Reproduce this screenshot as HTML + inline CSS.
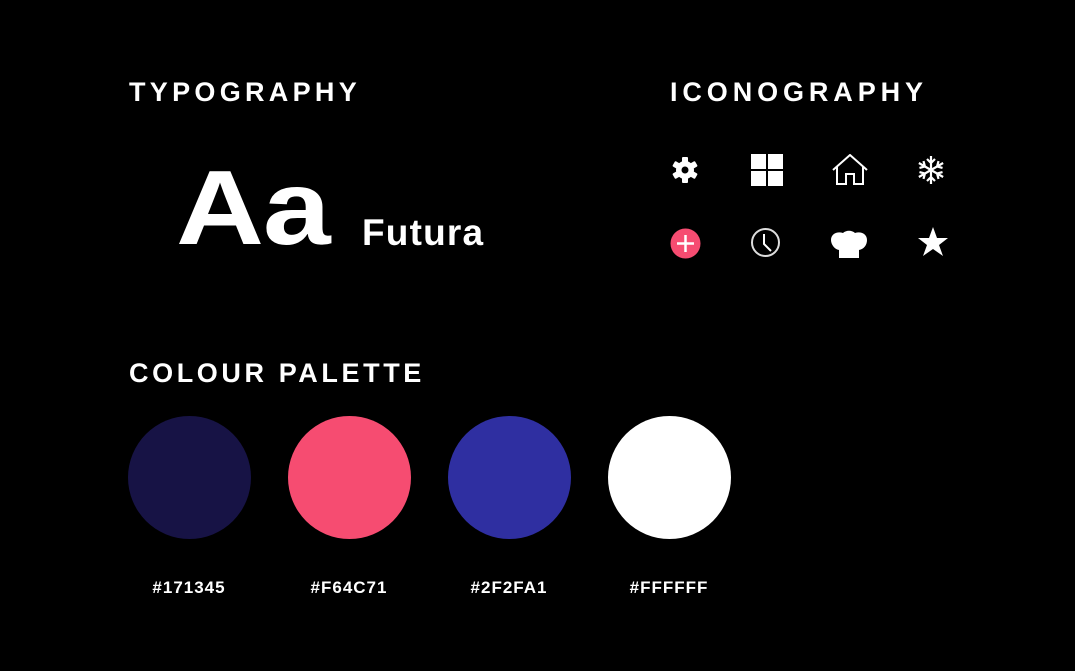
<!DOCTYPE html>
<html><head><style>
body{margin:0;width:1075px;height:671px;background:#000;overflow:hidden;position:relative;font-family:"Liberation Sans",sans-serif;color:#fff}
.h{position:absolute;font-weight:bold;font-size:27px;letter-spacing:4.3px;line-height:1}
.c{position:absolute;width:123px;height:123px;border-radius:50%;top:416px}
.l{position:absolute;top:578px;width:160px;text-align:center;font-weight:bold;font-size:17px;letter-spacing:1px}
svg{position:absolute}
</style></head><body>
<div class="h" style="left:129px;top:79px">TYPOGRAPHY</div>
<div class="h" style="left:670px;top:79px;letter-spacing:4.9px">ICONOGRAPHY</div>
<div class="h" style="left:129px;top:360px;letter-spacing:3.6px">COLOUR PALETTE</div>
<div style="position:absolute;left:176px;top:155px;font-size:106px;font-weight:bold;line-height:1;letter-spacing:-1px;transform:scaleX(1.15);transform-origin:0 0">Aa</div>
<div style="position:absolute;left:362px;top:214px;font-size:37px;font-weight:bold;line-height:1;letter-spacing:1.2px">Futura</div>

<svg style="left:670px;top:155px" width="30" height="30" viewBox="0 0 30 30"><g fill="#fff" transform="translate(15,15)"><circle r="9"/><g><rect x="-3" y="-13" width="6" height="26" rx="1"/><rect x="-3" y="-13" width="6" height="26" rx="1" transform="rotate(60)"/><rect x="-3" y="-13" width="6" height="26" rx="1" transform="rotate(120)"/></g><circle r="3.5" fill="#000"/></g></svg>
<svg style="left:751px;top:154px" width="32" height="32"><g fill="#fff"><rect x="0" y="0" width="15" height="15"/><rect x="17" y="0" width="15" height="15"/><rect x="0" y="17" width="15" height="15"/><rect x="17" y="17" width="15" height="15"/></g></svg>
<svg style="left:832px;top:154px" width="36" height="32"><path d="M1 16 L18 1 L35 16 M5 13 V30 H14 V20 H22 V30 H31 V13" fill="none" stroke="#fff" stroke-width="2"/></svg>
<svg style="left:916px;top:155px" width="30" height="30" viewBox="-15 -15 30 30"><g stroke="#fff" stroke-width="2.2" fill="none"><g id="a"><path d="M0-14V14M-4-11L0-7L4-11M-4 11L0 7L4 11"/></g><use href="#a" transform="rotate(60)"/><use href="#a" transform="rotate(120)"/></g></svg>
<svg style="left:670px;top:228px" width="31" height="31"><circle cx="15.5" cy="15.5" r="15" fill="#f64c71"/><path d="M15.5 7V24M7 15.5H24" stroke="#fff" stroke-width="2.5"/></svg>
<svg style="left:750px;top:227px" width="31" height="31"><circle cx="15.5" cy="15.5" r="13.5" fill="none" stroke="#ddd" stroke-width="2"/><path d="M14 7V17L21 24" fill="none" stroke="#fff" stroke-width="2"/></svg>
<svg style="left:831px;top:227px" width="36" height="32"><path d="M8 31 V23 C3 22 0 17 0 13 C0 7 6 4 12 6 C15 3 21 3 24 6 C30 4 36 7 36 13 C36 18 33 22 28 23 V31 Z" fill="#fff"/></svg>
<svg style="left:917px;top:226px" width="32" height="32" viewBox="0 0 32 32"><path d="M16 1 L20 12 L31 12 L22 19 L26 30 L16 23 L6 30 L10 19 L1 12 L12 12 Z" fill="#fff"/></svg>

<div class="c" style="left:128px;background:#171345"></div>
<div class="c" style="left:288px;background:#f64c71"></div>
<div class="c" style="left:448px;background:#2f2fa1"></div>
<div class="c" style="left:608px;background:#fff"></div>
<div class="l" style="left:109px">#171345</div>
<div class="l" style="left:269px">#F64C71</div>
<div class="l" style="left:429px">#2F2FA1</div>
<div class="l" style="left:589px">#FFFFFF</div>
</body></html>
